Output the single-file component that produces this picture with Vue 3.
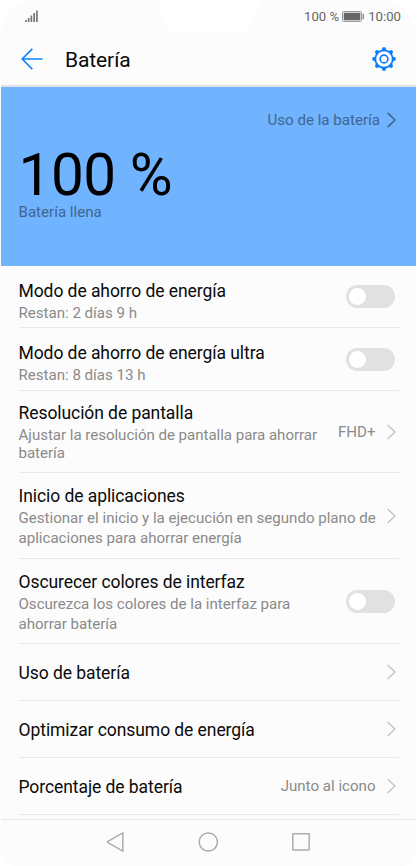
<template>
  <div class="phone">
    <div class="status-bar">
      <div class="notch">
        <svg width="100" height="33" viewBox="0 0 100 33">
          <path d="M-8 0C-1 0 1 4 1.500 10C2 23 8 32.500 20 32.500H76C90 32.500 96 24 97 11C97.500 4 99 0 106 0Z" fill="#fff" />
        </svg>
      </div>
      <svg class="signal" width="14" height="13" viewBox="0 0 14 13" fill="#777">
        <rect x="0" y="10" width="1.700" height="2" />
        <rect x="2.800" y="8" width="1.700" height="4" />
        <rect x="5.500" y="5.500" width="1.700" height="6.500" />
        <rect x="8.300" y="3" width="1.700" height="9" />
        <rect x="11.100" y="0.500" width="1.700" height="11.500" />
      </svg>
      <div class="status-right">
        <span>100 %</span>
        <svg class="battery" width="22" height="12" viewBox="0 0 22 12">
          <rect x="0.500" y="0.500" width="19" height="10" rx="1" fill="#fcfcfc" stroke="#999" />
          <rect x="1.700" y="1.700" width="16.600" height="7.600" fill="#666" />
          <rect x="20.700" y="2.800" width="1.200" height="5.400" fill="#777" />
        </svg>
        <span>10:00</span>
      </div>
    </div>

    <header class="header">
      <svg class="back" width="22" height="22" viewBox="0 0 22 22" fill="none" stroke="#0a84ff" stroke-width="1.600">
        <path d="M11.300 0.900L1.200 11L11.300 21.100M1.200 11H21.500" />
      </svg>
      <h1>Batería</h1>
      <svg class="gear" width="24" height="24" viewBox="-12 -12 24 24" fill="none" stroke="#0a7cff">
        <circle r="8.700" stroke-width="1.700" />
        <circle r="3.900" stroke-width="1.600" />
        <path
          v-for="n in 8"
          :key="n"
          d="M-2.600 -8.700L-1.200 -11.700H1.200L2.600 -8.700Z"
          fill="#0a7cff"
          stroke="none"
          :transform="`rotate(${n * 45})`"
        />
      </svg>
    </header>

    <section class="banner">
      <div class="usage-link">
        <span>Uso de la batería</span>
        <svg width="9" height="16" viewBox="0 0 9 16" fill="none" stroke="#3f668f" stroke-width="1.600">
          <path d="M0.700 0.900L7.900 8L0.700 15.100" />
        </svg>
      </div>
      <div class="level">100 %</div>
      <div class="level-note">Batería llena</div>
    </section>

    <main class="list">
      <div v-for="item in items" :key="item.title" class="row" :class="item.type">
        <div class="text">
          <div class="title">{{ item.title }}</div>
          <div v-for="line in item.lines" :key="line" class="sub">{{ line }}</div>
        </div>
        <button v-if="item.toggle" type="button" class="toggle" :class="{ on: item.on }" @click="item.on = !item.on">
          <span class="knob"></span>
        </button>
        <template v-else>
          <span v-if="item.value" class="value">{{ item.value }}</span>
          <svg class="chevron" width="9" height="16" viewBox="0 0 9 16" fill="none" stroke="#c4c4c4" stroke-width="1.400">
            <path d="M0.700 0.900L7.900 8L0.700 15.100" />
          </svg>
        </template>
      </div>
    </main>

    <nav class="nav">
      <svg width="18" height="20" viewBox="0 0 18 20">
        <path d="M16.800 0.900V19.100L1.500 10.300V9.700Z" />
      </svg>
      <svg width="20" height="20" viewBox="0 0 20 20">
        <circle cx="10.300" cy="10" r="9.100" />
      </svg>
      <svg width="18" height="20" viewBox="0 0 18 20">
        <rect x="0.800" y="1.700" width="16.400" height="16.400" rx="0.500" />
      </svg>
    </nav>
  </div>
</template>

<script setup>
import { ref } from 'vue'

const items = ref([
  { type: 'saver', title: 'Modo de ahorro de energía', lines: ['Restan: 2 días 9 h'], toggle: true, on: false },
  { type: 'ultra', title: 'Modo de ahorro de energía ultra', lines: ['Restan: 8 días 13 h'], toggle: true, on: false },
  {
    type: 'resolution',
    title: 'Resolución de pantalla',
    lines: ['Ajustar la resolución de pantalla para ahorrar', 'batería'],
    value: 'FHD+'
  },
  {
    type: 'launch',
    title: 'Inicio de aplicaciones',
    lines: ['Gestionar el inicio y la ejecución en segundo plano de', 'aplicaciones para ahorrar energía']
  },
  {
    type: 'darken',
    title: 'Oscurecer colores de interfaz',
    lines: ['Oscurezca los colores de la interfaz para', 'ahorrar batería'],
    toggle: true,
    on: false
  },
  { type: 'single', title: 'Uso de batería' },
  { type: 'single', title: 'Optimizar consumo de energía' },
  { type: 'single', title: 'Porcentaje de batería', value: 'Junto al icono' }
])
</script>

<style>
body {
  margin: 0;
  background: #fff;
}
</style>

<style scoped>
.phone {
  box-sizing: border-box;
  width: 417px;
  height: 866px;
  padding: 0 1px;
  display: flex;
  flex-direction: column;
  background: #fcfcfc;
  background-clip: content-box;
  border-radius: 34px 34px 14px 14px;
  overflow: hidden;
  font-family: Roboto, 'Noto Sans', sans-serif;
  color: #0a0a0a;
}

.status-bar {
  position: relative;
  display: flex;
  align-items: center;
  justify-content: space-between;
  height: 33px;
  padding: 0 15px 0 24px;
  flex: none;
}

.notch {
  position: absolute;
  left: 158px;
  top: 0;
}

.notch svg {
  display: block;
  overflow: visible;
}

.status-right {
  display: flex;
  align-items: center;
  font-size: 13.2px;
  line-height: 33px;
  color: #666;
}

.battery {
  margin: 1px 4px 0 3px;
}

.header {
  display: flex;
  align-items: center;
  height: 52px;
  padding: 0 20px;
  border-bottom: 2px solid #e2e2e2;
  flex: none;
}

.header h1 {
  flex: 1;
  margin: 2px 0 0 22px;
  font-size: 21px;
  font-weight: 400;
  line-height: 26px;
  letter-spacing: -0.1px;
}

.banner {
  box-sizing: border-box;
  height: 179px;
  padding: 23px 20px 0 17.5px;
  background: #70b3ff;
  color: #3f668f;
  flex: none;
}

.usage-link {
  display: flex;
  justify-content: flex-end;
  align-items: center;
  gap: 7px;
  height: 20px;
  font-size: 15.1px;
}

.level {
  margin-top: 16px;
  font-size: 58.5px;
  line-height: 58px;
  letter-spacing: -0.5px;
  color: #000;
}

.level-note {
  font-size: 15.1px;
  line-height: 16px;
}

.list {
  flex: 1;
  min-height: 0;
  padding: 0 17px 0 17.5px;
}

.row {
  box-sizing: border-box;
  display: flex;
  align-items: center;
  height: 57px;
  padding-right: 3px;
  border-bottom: 1px solid #e8e8e8;
}

.text {
  flex: 1;
  align-self: flex-start;
  padding-top: 14px;
  white-space: nowrap;
}

.title {
  font-size: 17.5px;
  line-height: 22px;
  letter-spacing: -0.07px;
}

.sub {
  font-size: 15.1px;
  line-height: 19.5px;
  letter-spacing: -0.01px;
  color: #8a8a8a;
}

.saver {
  height: 62px;
}

.ultra {
  height: 63px;
}

.resolution {
  height: 82px;
}

.launch {
  height: 86px;
}

.darken {
  height: 85px;
}

.resolution .sub {
  line-height: 18px;
  letter-spacing: -0.04px;
}

.saver .title,
.ultra .title {
  margin-bottom: 1.5px;
}

.resolution .title,
.launch .title,
.darken .title {
  margin-bottom: 2px;
}

.resolution .text {
  padding-top: 11px;
}

.launch .text,
.darken .text {
  padding-top: 12px;
}

.single .text {
  padding-top: 18px;
}

.value {
  font-size: 15.1px;
  color: #8a8a8a;
}

.chevron {
  margin-left: 11.5px;
  flex: none;
}

.toggle {
  width: 49px;
  height: 23px;
  margin-right: 1px;
  padding: 3px;
  border: none;
  border-radius: 12px;
  background: #e1e1e1;
  cursor: pointer;
  display: flex;
  flex: none;
}

.toggle.on {
  justify-content: flex-end;
  background: #0a84ff;
}

.knob {
  width: 17px;
  height: 17px;
  border-radius: 50%;
  background: #fff;
}

.nav {
  box-sizing: border-box;
  display: flex;
  justify-content: center;
  align-items: center;
  gap: 74px;
  height: 47px;
  padding: 0 1px 2px 0;
  border-top: 1px solid #e6e6e6;
  flex: none;
}

.nav svg {
  fill: none;
  stroke: #adadad;
  stroke-width: 1.5;
}
</style>
